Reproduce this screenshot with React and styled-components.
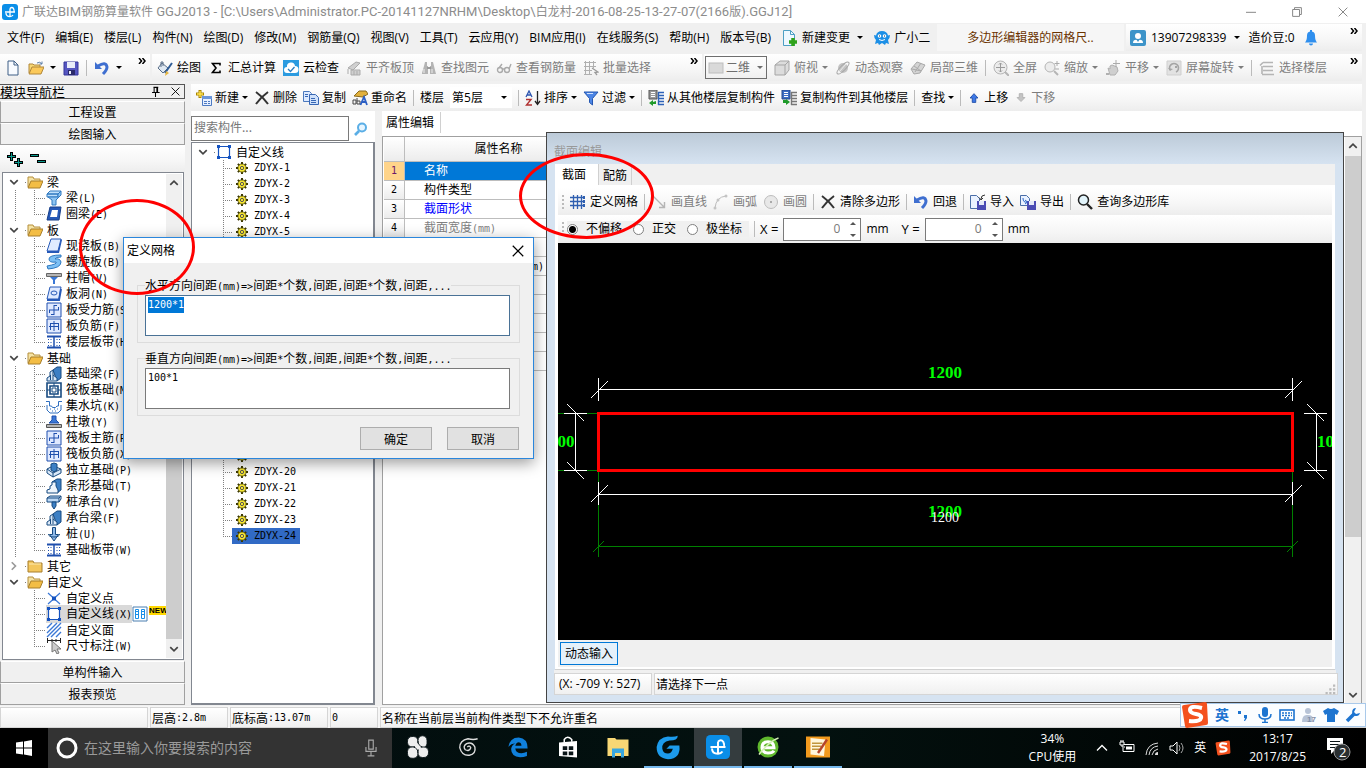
import React, { useEffect, useRef } from "react";
import styled, { createGlobalStyle, css } from "styled-components";

const SANS = `"Open Sans", "Noto Sans CJK SC", sans-serif`;
const SONG = `"Noto Sans CJK SC", sans-serif`;

/* ---------- text helper: narrow latin glyphs between CJK ---------- */

function Song({ text, as: Latin = Narrow }) {
  return text
    .split(/([\x20-\x7e]+)/)
    .filter(Boolean)
    .map((part, i) =>
      /[\x20-\x7e]/.test(part) ? <Latin key={i}>{part}</Latin> : part
    );
}

/* ---------- icons ---------- */

const Svg = ({ size = 16, children, ...rest }) => (
  <svg
    width={size}
    height={size}
    viewBox="0 0 16 16"
    fill="none"
    aria-hidden="true"
    {...rest}
  >
    {children}
  </svg>
);

const icons = {
  app: (
    <Svg>
      <rect width="16" height="16" rx="3" fill="#0a8ee8" />
      <path d="M3 8h10M8 4.500V12M8 4.500q2-2 3.500 0 1 2 .5 3.500M4 9q0 3.500 4 3.500 2 0 3-1.500" stroke="#fff" strokeWidth="1.300" />
    </Svg>
  ),
  doc: (
    <Svg>
      <path d="M3 1h6l4 4v10H3z" fill="#f8fbff" stroke="#3f5f86" />
      <path d="M9 1v4h4" stroke="#3f5f86" />
    </Svg>
  ),
  open: (
    <Svg>
      <path d="M1 13V4h4l1 1h6v2" fill="#f7d774" stroke="#b1873a" />
      <path d="M1 14l3-7h12l-3 7z" fill="#fbc95a" stroke="#b1873a" />
      <path d="M9 3q3-2 5 1m0-2.500V4h-2.500" stroke="#5c7ea8" />
    </Svg>
  ),
  save: (
    <Svg>
      <path d="M1 2h14v13H1z" fill="#5556c0" stroke="#34349a" />
      <path d="M4 2h8v6H4z" fill="#e8ecf8" />
      <path d="M5 10h7v5H5z" fill="#2a2a6a" />
      <path d="M6 11h2v3H6z" fill="#e8ecf8" />
    </Svg>
  ),
  undo: (
    <Svg>
      <path d="M4 6q8-5 9 1 0 3-4 7" stroke="#3f6fd0" strokeWidth="3" />
      <path d="M1 2v7h7z" fill="#3f6fd0" />
    </Svg>
  ),
  paint: (
    <Svg>
      <path d="M5 3l6 5-5 5-5-5z" fill="#dfe8f2" stroke="#5a6f88" />
      <path d="M4 7V2h2v4" stroke="#5a6f88" />
      <path d="M15 3L8 13" stroke="#2f5c96" strokeWidth="2" />
      <path d="M9 11l3 2-4 3z" fill="#e8b740" />
    </Svg>
  ),
  sigma: (
    <Svg>
      <path d="M12 5.500V3.500H4.500L8 8l-3.500 4.500H12v-2" stroke="#000" strokeWidth="1.600" />
    </Svg>
  ),
  cloud: (
    <Svg>
      <rect width="16" height="16" fill="#2b9be0" />
      <path d="M4 13a3 3 0 0 1 0-6 4 4 0 0 1 8-1 3.500 3.500 0 0 1 0 7z" fill="#fff" />
      <path d="M5 9l2.500 2.500L11.500 7" stroke="#2b7ec0" strokeWidth="1.300" />
    </Svg>
  ),
  slab: (
    <Svg>
      <path d="M2 8l8-6 4 1-7 7zM5 10h9v5H5z" fill="#d0d0d0" stroke="#ababab" />
      <path d="M8 11v4M11 11v4M2 9v5" stroke="#ababab" />
    </Svg>
  ),
  find: (
    <Svg>
      <path d="M4 2h2v4H3zM10 2h2l1 4h-3zM1 13l2-7h4v8H1zM9 6h4l2 8H9z" fill="#b4b4b4" />
      <path d="M6 8h4" stroke="#999" strokeWidth="2" />
      <path d="M3 9v4M11 9v4" stroke="#eee" />
    </Svg>
  ),
  glasses: (
    <Svg>
      <circle cx="4" cy="10" r="2.500" stroke="#aaa" strokeWidth="1.400" />
      <circle cx="11" cy="10" r="2.500" stroke="#aaa" strokeWidth="1.400" />
      <path d="M6 9h3M3 8l3-4M13 9l2-5" stroke="#aaa" strokeWidth="1.400" />
    </Svg>
  ),
  batch: (
    <Svg>
      <path d="M1 2.500h12M1 6.500h12M1 10.500h8M1 14.500h8M2.500 1v14M6.500 1v14M10.500 1v7" stroke="#b0b0b0" />
      <path d="M9 8l6 4-3 .5L14 15" stroke="#999" strokeWidth="1.300" />
    </Svg>
  ),
  flat: (
    <Svg>
      <rect x="1" y="3" width="14" height="10" fill="#d9d9d9" stroke="#bdbdbd" />
    </Svg>
  ),
  cube: (
    <Svg>
      <path d="M1 5l5-4h9v9l-4 5H1z" fill="#dcdcdc" stroke="#a5a5a5" />
      <path d="M1 5h10v10M11 5l4-4" stroke="#a5a5a5" />
    </Svg>
  ),
  orbit: (
    <Svg>
      <circle cx="8" cy="8" r="5" fill="#c3c3c3" />
      <ellipse cx="8" cy="8" rx="8" ry="2.500" transform="rotate(-45 8 8)" stroke="#a5a5a5" />
      <path d="M4 12l7-8" stroke="#eee" />
    </Svg>
  ),
  local3d: (
    <Svg>
      <path d="M1 9l6-7 8 3-5 8-6 1z" fill="#d4d4d4" stroke="#a9a9a9" />
      <path d="M4 6l7 5M5 12l6-9M2 9l9 2" stroke="#a9a9a9" />
    </Svg>
  ),
  full: (
    <Svg>
      <circle cx="7.500" cy="7.500" r="6.500" fill="#ececec" stroke="#b5b5b5" />
      <path d="M7.500 3v9M3 7.500h9M6 4.500L7.500 3 9 4.500M6 10.500L7.500 12 9 10.500" stroke="#9b9b9b" />
      <path d="M12 12l4 4" stroke="#b5b5b5" strokeWidth="2" />
    </Svg>
  ),
  zoom: (
    <Svg>
      <circle cx="6" cy="7" r="5" fill="#ececec" stroke="#b5b5b5" />
      <path d="M10 11l4 4" stroke="#b5b5b5" strokeWidth="2" />
      <path d="M13 1v5M10.500 3.500h5M11 9h4" stroke="#ababab" />
    </Svg>
  ),
  pan: (
    <Svg>
      <path d="M3 8l2 1V6l2-1 5 2 1 4-3 4H5z" fill="#cfcfcf" stroke="#b0b0b0" />
      <path d="M11 0v7M8 3.500h7" stroke="#ababab" />
      <path d="M1 13h3v2H1z" fill="#b0b0b0" />
    </Svg>
  ),
  rotate: (
    <Svg>
      <path d="M1 1h14v14H1z" fill="#e2e2e2" stroke="#cfcfcf" />
      <path d="M4 10a4.500 4.500 0 1 1 6 2" stroke="#a5a5a5" strokeWidth="1.600" />
      <path d="M2 8l2 3 3-2zM9 6h2v2H9z" fill="#a5a5a5" />
    </Svg>
  ),
  floors: (
    <Svg>
      <path d="M4 2.500h10M1 5.500l3-3M4 6.500h10M4 10.500h10M3 14.500h12M3 6v8" stroke="#b5b5b5" strokeWidth="1.600" />
    </Svg>
  ),
  newChange: (
    <Svg>
      <path d="M1.500 .5h7l4 4v11h-11z" fill="#eef8ff" stroke="#4c9fc4" />
      <path d="M8.500 .5v4h4" stroke="#4c9fc4" />
      <path d="M11 8v8M7 12h8" stroke="#2fa21a" strokeWidth="3.500" />
    </Svg>
  ),
  mascot: (
    <Svg>
      <path d="M2 10Q0 8 0 5l2 .5Q3 1 8 1t6 4.500L16 5q0 3-2 5l1 4-3-1-1 2-3-2-3 2-1-2-3 1z" fill="#1c8fe6" />
      <circle cx="5.500" cy="6" r="1.800" fill="#fff" />
      <circle cx="10.500" cy="6" r="1.800" fill="#fff" />
      <path d="M5 9.500q3 2 6 0" stroke="#fff" />
      <path d="M5 5.500h1v1H5zM10 5.500h1v1h-1z" fill="#024" />
    </Svg>
  ),
  user: (
    <Svg>
      <rect width="16" height="16" rx="2" fill="#3d94c9" />
      <circle cx="8" cy="6" r="3" fill="#fff" />
      <path d="M3 13q0-4 5-3 5-1 5 3z" fill="#fff" />
      <path d="M6 9h4l-2 3z" fill="#3d94c9" />
    </Svg>
  ),
  bell: (
    <Svg>
      <path d="M2 12.500q2-2 2-7a4 4 0 0 1 8 0q0 5 2 7z" fill="#2f8fee" />
      <path d="M6 13.500h4a2 2 0 0 1-4 0zM7 0h2v2H7z" fill="#2f8fee" />
    </Svg>
  ),
  create: (
    <Svg>
      <path d="M6.500 6.500h9v9h-9z" fill="#e7f0ff" stroke="#4d7ac2" />
      <path d="M6 6h10v3H6z" fill="#6a95db" />
      <path d="M8 11.500h3m1 0h2M8 13.500h3m1 0h2" stroke="#4d7ac2" />
      <path d="M4 0v8M0 4h8" stroke="#a98500" strokeWidth="3" />
      <path d="M4 1v6M1 4h6" stroke="#ffe34d" strokeWidth="1.400" />
    </Svg>
  ),
  cross: (
    <Svg>
      <path d="M2 2q7 5 12 12M14 2Q7 7 2 14" stroke="#333" strokeWidth="2" />
    </Svg>
  ),
  copy: (
    <Svg>
      <path d="M.5 1.500h6l2 2v8h-8z" fill="#dbe9ff" stroke="#4b78bd" />
      <path d="M6.500 4.500h6l3 3v7h-9z" fill="#cfe1fb" stroke="#3867b4" />
      <path d="M2 4.500h3M2 6.500h3M8 8.500h4M8 10.500h5M8 12.500h5" stroke="#3867b4" />
    </Svg>
  ),
  rename: (
    <Svg>
      <path d="M2 6l5-5h7l2 3-5 3z" fill="#e2b13c" stroke="#8a6a1c" />
      <path d="M1 10h3v4H1zM5 8v6h3v-3H5" stroke="#444" />
      <path d="M8.500 15L12 7l3 8M10 12h4" stroke="#2c5fc4" strokeWidth="1.800" />
    </Svg>
  ),
  sort: (
    <Svg>
      <path d="M1 7l3-6 3 6M2 5h4" stroke="#2c55b0" strokeWidth="1.300" />
      <path d="M1 9.500h5L1.500 15H7" stroke="#b03030" strokeWidth="1.400" />
      <path d="M12.500 1v13M10 11l2.500 3.500L15 11" stroke="#222" strokeWidth="1.300" />
    </Svg>
  ),
  filter: (
    <Svg>
      <path d="M1 2h14L9.500 8.500V15L6.500 12.500v-4z" fill="#4d86e6" stroke="#2456b0" />
      <path d="M4 3.500h6" stroke="#cfe1ff" />
    </Svg>
  ),
  copyFrom: (
    <Svg>
      <path d="M1 0h8v9H1z" fill="#9a9a9a" stroke="#555" />
      <path d="M3 2.500h4M3 4.500h4M3 6.500h4" stroke="#fff" />
      <path d="M10 2.500h6M10 5.500h6M10 8.500h6M10 11.500h6M10 14.500h6M10.500 2v13" stroke="#2d62b8" strokeWidth="1.400" />
      <path d="M8 11v3H5v2l-4-3 4-3v2z" fill="#1f9a2a" />
    </Svg>
  ),
  copyTo: (
    <Svg>
      <path d="M1 0h8v9H1z" fill="#3b6cc4" stroke="#24488c" />
      <path d="M3 2.500h4M3 4.500h4M3 6.500h4" stroke="#fff" />
      <path d="M10 2.500h6M10 5.500h6M10 8.500h6M10 11.500h6M10 14.500h6M10.500 2v13" stroke="#777" strokeWidth="1.400" />
      <path d="M2 10v3h3v2l4-3-4-3v1z" fill="#1f9a2a" />
    </Svg>
  ),
  up: (
    <Svg size={14}>
      <path d="M8 3l4.500 5H10v5H6V8H3.500z" fill="#3d78e6" stroke="#1f4ba6" />
    </Svg>
  ),
  down: (
    <Svg size={14}>
      <path d="M8 12L3.500 7.500H6V3h4v4.500h2.500z" fill="#c4c4c4" stroke="#b0b0b0" />
    </Svg>
  ),
  grid: (
    <Svg>
      <path d="M0 3.500h15M0 7.500h15M0 11.500h15M3.500 1v14M7.500 1v14M11.500 1v14" stroke="#2f5fb0" strokeWidth="1.300" />
      <path d="M13 2h2v3h-2zM13 6h2v3h-2zM13 10h2v3h-2z" fill="#2f5fb0" />
    </Svg>
  ),
  line: (
    <Svg>
      <path d="M1 1l12 12M13.500 8v5.500H8" stroke="#b5b5b5" strokeWidth="1.400" />
    </Svg>
  ),
  arc: (
    <Svg>
      <path d="M2 14Q3 3 13 2" stroke="#bcbcbc" />
      <circle cx="2" cy="14" r="1.500" fill="#c4c4c4" />
      <circle cx="13" cy="2" r="1.500" fill="#c4c4c4" />
      <circle cx="5" cy="6" r="1.500" fill="#c4c4c4" />
    </Svg>
  ),
  circle: (
    <Svg>
      <circle cx="8" cy="8" r="6.500" fill="#e8e8e8" stroke="#bdbdbd" />
      <path d="M7 7h2v2H7z" fill="#aaa" />
    </Svg>
  ),
  importDoc: (
    <Svg>
      <path d="M.5 1.500h6l3 3v10h-9z" fill="#eaf2ff" stroke="#4a6ea8" />
      <path d="M7 7h9v9H7z" fill="#4b4cb4" />
      <path d="M9 7h5v4H9z" fill="#e6eaf8" />
      <path d="M15 1q-4 0-4 4M9 3.500L11 6l2-2" stroke="#333" />
    </Svg>
  ),
  exportDoc: (
    <Svg>
      <path d="M.5 1.500h6l3 3v7h-9z" fill="#eaf2ff" stroke="#4a6ea8" />
      <path d="M7 7h9v9H7z" fill="#4b4cb4" />
      <path d="M9 7h5v4H9z" fill="#e6eaf8" />
      <path d="M3 4q0 5 4 4M5 6l2.500 2L5 10" stroke="#2b66c8" />
    </Svg>
  ),
  lens: (
    <Svg>
      <circle cx="6.500" cy="6" r="5" fill="#e2f4fb" stroke="#222" strokeWidth="1.500" />
      <path d="M10 10l5 5" stroke="#222" strokeWidth="2.400" />
    </Svg>
  ),
  searchBlue: (
    <Svg>
      <circle cx="9" cy="6.500" r="4" fill="#e6f5ff" stroke="#5aaee6" strokeWidth="2" />
      <path d="M6 10l-4 4" stroke="#5aaee6" strokeWidth="2.600" />
    </Svg>
  ),
  folderOpen: (
    <Svg>
      <path d="M1 13V3h5l1 2h6v3" fill="#f5e3a4" stroke="#b58f3c" />
      <path d="M1 14l3-7h12l-3 7z" fill="#f3bd45" stroke="#a87f2c" />
    </Svg>
  ),
  folder: (
    <Svg>
      <path d="M1 14V3h5l1 2h8v9z" fill="#f3c65c" stroke="#a87f2c" />
      <path d="M2 6h12" stroke="#fdeab0" />
    </Svg>
  ),
  square: (
    <Svg>
      <path d="M2.500 2.500h11v11h-11z" fill="#fff" stroke="#1553c0" strokeWidth="1.200" />
      <path d="M1 1h3v3H1zM12 1h3v3h-3zM1 12h3v3H1zM12 12h3v3h-3z" fill="#1553c0" />
    </Svg>
  ),
  beam: (
    <Svg>
      <path d="M1 4l3-3h11l-3 3zM1 4h11v3H1z" fill="#bfe0fb" stroke="#2f78c0" />
      <path d="M2 7l4 3v5h4v-5l5-5V1l-3 3v3z" fill="#8ec5f2" stroke="#2f78c0" />
    </Svg>
  ),
  ring: (
    <Svg>
      <path d="M4 1h11l-2 13H1z" fill="#2659b8" stroke="#173f8a" />
      <path d="M6 4h6l-1 7H4z" fill="#fff" />
    </Svg>
  ),
  plate: (
    <Svg>
      <path d="M5 1h10l-3 12H1z" fill="#e0ecff" stroke="#2659b8" />
      <path d="M15 1l-3 12H1v2h12l3-13z" fill="#2659b8" />
    </Svg>
  ),
  spiral: (
    <Svg>
      <path d="M15 1Q3 1 3 5t7 3q2 2-9 4l1 3q13-1 13-7-1-4-6-3 0-2 6-2z" fill="#7cc0f4" stroke="#2f78c0" />
    </Svg>
  ),
  cap: (
    <Svg>
      <path d="M.5 3.500h15v3H.5z" fill="#b5b5b5" stroke="#666" />
      <path d="M4 7h8l-3 3v4H7v-4z" fill="#3a78d6" />
    </Svg>
  ),
  hole: (
    <Svg>
      <path d="M4 1h11l-2 12H1z" fill="#dfeaff" stroke="#2659b8" />
      <path d="M1 14h12l2-11" stroke="#2659b8" strokeWidth="2" />
      <ellipse cx="8" cy="7" rx="3" ry="2" stroke="#2659b8" />
    </Svg>
  ),
  rebar: (
    <Svg>
      <path d="M1 1h14v14H1z" fill="#dfe9ff" stroke="#1e4fae" />
      <path d="M8 3v10M3 8h10M3.500 8v3M12.500 5v3M5 12.500h3M8 3.500h3" stroke="#1e4fae" />
    </Svg>
  ),
  rebarNeg: (
    <Svg>
      <path d="M1 1h14v14H1z" fill="#dfe9ff" stroke="#1e4fae" />
      <path d="M8 3v10M4 5.500h9M3 8.500h10M4.500 5v7M12.500 5v7" stroke="#1e4fae" />
    </Svg>
  ),
  strip: (
    <Svg>
      <path d="M1 2.500h14M1 13.500h14" stroke="#1e4fae" strokeWidth="2" />
      <path d="M8 3v10" stroke="#1e4fae" strokeWidth="1.500" />
      <path d="M2.500 5v7M13.500 5v7M5 5v7M11 5v7" stroke="#1e4fae" strokeDasharray="1 2" />
    </Svg>
  ),
  baseBeam: (
    <Svg>
      <path d="M7 4l4-3h4v11l-4 3z" fill="#3c7fc4" stroke="#174a80" />
      <path d="M1 15v-3l3-2V6l3-2v5l4 3v3z" fill="#dbe9f8" stroke="#174a80" />
      <path d="M4.500 9v5M7 9v5" stroke="#174a80" />
    </Svg>
  ),
  raft: (
    <Svg>
      <path d="M1 1h14v14H1zM4 4h8v8H4z" stroke="#174a80" strokeWidth="1.600" />
      <path d="M8 1v3M8 12v3M1 8h3M12 8h3M6 6h4v4H6z" stroke="#174a80" />
    </Svg>
  ),
  pit: (
    <Svg>
      <path d="M0 3.500h3.500V8h2l1 1.500h3L11 8h1.500V3.500H16M1 7v5l3 3h8l3-3V7" stroke="#2f6fc0" />
      <path d="M4 11h1M8 11h1M11 11h1M6 13h1M9 13h1" stroke="#2f6fc0" />
    </Svg>
  ),
  pier: (
    <Svg>
      <path d="M6 2h4v4l3 3H3l3-3z" fill="#3a78d6" stroke="#1e4fae" />
      <path d="M.5 10.500h15v3H.5z" fill="#b5b5b5" stroke="#555" />
    </Svg>
  ),
  isolated: (
    <Svg>
      <path d="M1 7l6-3 8 3v4l-8 4-6-4z" fill="#d9e8f8" stroke="#174a80" />
      <path d="M5 2l3-1 3 1v6L8 10 5 8z" fill="#3c7fc4" stroke="#174a80" />
      <path d="M7 15v-4M1 7l6 4 8-4" stroke="#174a80" />
    </Svg>
  ),
  stripBase: (
    <Svg>
      <path d="M6 4l5-3h4v11l-4 3z" fill="#3c7fc4" stroke="#174a80" />
      <path d="M1 15v-3l3-1V8l2-1V4h4v4l2 4v3z" fill="#eef5fc" stroke="#174a80" />
    </Svg>
  ),
  pileCap: (
    <Svg>
      <path d="M1 4l3-2h11l-2 2v4H1zM1 4h12M13 8l2-3V2" fill="#bcd8f5" stroke="#174a80" />
      <path d="M6 8h4v4l-2 3-2-3z" fill="#3c7fc4" stroke="#174a80" />
    </Svg>
  ),
  pile: (
    <Svg>
      <path d="M6.500 1.500h3v7h3L8 15 3.500 8.500h3z" fill="#8fb9e8" stroke="#174a80" />
      <path d="M2.500 8q0 3 5.500 3t5.500-3" stroke="#174a80" />
    </Svg>
  ),
  point: (
    <Svg>
      <path d="M2 3l12 11M14 3L2 14" stroke="#3a78d6" strokeWidth="1.200" />
      <path d="M6 6.500h4v4H6z" fill="#1553c0" />
    </Svg>
  ),
  face: (
    <Svg>
      <path d="M1 6l5-5M1 11L11 1M1 15L15 1M5 15L15 5M10 15l5-5" stroke="#3a78d6" strokeWidth="1.400" />
    </Svg>
  ),
  dimension: (
    <Svg>
      <path d="M1 2.500h14M1.500 0v5M14.500 0v5M6 1v3M10 1v3" stroke="#222" />
      <path d="M6 3v11l3-2 2 4 2-1-2-4h4z" fill="#ccc" stroke="#777" />
    </Svg>
  ),
  book: (
    <Svg>
      <path d="M1 1h14v14H1z" fill="#fff" stroke="#4a7fb0" />
      <path d="M3.500 3.500h3v9h-3zM9.500 3.500h3v9h-3z" fill="#fff" stroke="#1a8fe8" />
      <path d="M3 5.500h4M3 8.500h4M9 5.500h4M9 8.500h4" stroke="#1a8fe8" />
    </Svg>
  ),
  gear: (
    <Svg size={12}>
      <path d="M8 0v16M0 8h16M2.500 2.500l11 11M13.500 2.500l-11 11" stroke="#3b3700" strokeWidth="2.600" />
      <circle cx="8" cy="8" r="5.500" fill="#f7e733" stroke="#3b3700" />
      <circle cx="8" cy="8" r="2.200" fill="#f7e733" stroke="#555" strokeWidth="1.300" />
    </Svg>
  ),
};

const Chevron = ({ dir = "down", color = "#444", size = 12 }) => {
  const paths = {
    down: "M3 5.500l5 5 5-5",
    up: "M3 10.500l5-5 5 5",
    right: "M5 3l5 5-5 5",
  };
  return (
    <Svg size={size}>
      <path d={paths[dir]} stroke={color} strokeWidth="2.200" />
    </Svg>
  );
};

const CloseIcon = ({ size = 10, color = "#000" }) => (
  <Svg size={size}>
    <path d="M1 1l14 14M15 1L1 15" stroke={color} strokeWidth="1.600" />
  </Svg>
);

/* ---------- data ---------- */

const menus = [
  "文件(F)", "编辑(E)", "楼层(L)", "构件(N)", "绘图(D)", "修改(M)", "钢筋量(Q)",
  "视图(V)", "工具(T)", "云应用(Y)", "BIM应用(I)", "在线服务(S)", "帮助(H)", "版本号(B)",
];

const drawTools = [
  { icon: "paint", label: "绘图" },
  { icon: "sigma", label: "汇总计算" },
  { icon: "cloud", label: "云检查" },
  { icon: "slab", label: "平齐板顶", off: true },
  { icon: "find", label: "查找图元", off: true },
  { icon: "glasses", label: "查看钢筋量", off: true },
  { icon: "batch", label: "批量选择", off: true },
];

const viewTools = [
  { icon: "cube", label: "俯视", off: true, drop: true },
  { icon: "orbit", label: "动态观察", off: true },
  { icon: "local3d", label: "局部三维", off: true },
  { sep: true },
  { icon: "full", label: "全屏", off: true },
  { icon: "zoom", label: "缩放", off: true, drop: true },
  { icon: "pan", label: "平移", off: true, drop: true },
  { icon: "rotate", label: "屏幕旋转", off: true, drop: true },
  { sep: true },
  { icon: "floors", label: "选择楼层", off: true },
];

const partTools = [
  { icon: "create", label: "新建", drop: true },
  { icon: "cross", label: "删除" },
  { icon: "copy", label: "复制" },
  { icon: "rename", label: "重命名" },
  { sep: true },
];

const listTools = [
  { sep: true },
  { icon: "sort", label: "排序", drop: true },
  { icon: "filter", label: "过滤", drop: true },
  { sep: true },
  { icon: "copyFrom", label: "从其他楼层复制构件" },
  { icon: "copyTo", label: "复制构件到其他楼层" },
  { sep: true },
  { label: "查找", drop: true },
  { sep: true },
  { icon: "up", label: "上移" },
  { icon: "down", label: "下移", off: true },
];

const polygonTools = [
  { icon: "grid", label: "定义网格" },
  { sep: true },
  { icon: "line", label: "画直线", off: true },
  { icon: "arc", label: "画弧", off: true },
  { icon: "circle", label: "画圆", off: true },
  { sep: true },
  { icon: "cross", label: "清除多边形" },
  { sep: true },
  { icon: "undo", label: "回退" },
  { sep: true },
  { icon: "importDoc", label: "导入" },
  { icon: "exportDoc", label: "导出" },
  { sep: true },
  { icon: "lens", label: "查询多边形库" },
];

const modules = [
  { name: "梁", open: true, items: [["beam", "梁(L)"], ["ring", "圈梁(E)"]] },
  {
    name: "板",
    open: true,
    items: [
      ["plate", "现浇板(B)"], ["spiral", "螺旋板(B)"], ["cap", "柱帽(V)"], ["hole", "板洞(N)"],
      ["rebar", "板受力筋(S)"], ["rebarNeg", "板负筋(F)"], ["strip", "楼层板带(H)"],
    ],
  },
  {
    name: "基础",
    open: true,
    items: [
      ["baseBeam", "基础梁(F)"], ["raft", "筏板基础(M)"], ["pit", "集水坑(K)"], ["pier", "柱墩(Y)"],
      ["rebar", "筏板主筋(R)"], ["rebarNeg", "筏板负筋(X)"], ["isolated", "独立基础(P)"],
      ["stripBase", "条形基础(T)"], ["pileCap", "桩承台(V)"], ["baseBeam", "承台梁(F)"],
      ["pile", "桩(U)"], ["strip", "基础板带(W)"],
    ],
  },
  { name: "其它", open: false, items: [] },
  {
    name: "自定义",
    open: true,
    last: true,
    items: [["point", "自定义点"], ["square", "自定义线(X)"], ["face", "自定义面"], ["dimension", "尺寸标注(W)"]],
  },
];

const parts = Array.from({ length: 24 }, (_, i) => `ZDYX-${i + 1}`);

const properties = [
  { name: "名称", tone: "selected" },
  { name: "构件类型" },
  { name: "截面形状", tone: "link" },
  { name: "截面宽度(mm)", tone: "muted" },
  { name: "截面高度(mm)", tone: "muted" },
  { name: "轴线距左边线距离(mm)" },
  { name: "" }, { name: "" }, { name: "" }, { name: "" }, { name: "" },
];

/* ---------- shared pieces ---------- */

function Tools({ items }) {
  return items.map((t, i) =>
    t.sep ? (
      <Separator key={i} />
    ) : (
      <Tool key={i} type="button" disabled={t.off}>
        {t.icon && icons[t.icon]}
        <span>{t.label}</span>
        {t.drop && <Caret />}
      </Tool>
    )
  );
}

const MoreIcon = () => (
  <More>
    <svg width="8" height="6" viewBox="0 0 8 6" aria-hidden="true">
      <path d="M1 0l2.500 3L1 6M4.500 0L7 3 4.500 6" fill="none" stroke="#000" strokeWidth="1.500" />
    </svg>
  </More>
);

function TitleBar() {
  return (
    <Title>
      {icons.app}
      <h1>
        <Song
          as={TitleLatin}
          text={"广联达BIM钢筋算量软件 GGJ2013 - [C:\\Users\\Administrator.PC-20141127NRHM\\Desktop\\白龙村-2016-08-25-13-27-07(2166版).GGJ12]"}
        />
      </h1>
      <WindowButton type="button" aria-label="minimize">
        <Svg size={10}><path d="M0 8.500h16" stroke="#888" strokeWidth="1.600" /></Svg>
      </WindowButton>
      <WindowButton type="button" aria-label="restore">
        <Svg size={10}>
          <path d="M1 4h11v11H1zM4 4V1h11v11h-3" stroke="#888" strokeWidth="1.600" />
        </Svg>
      </WindowButton>
      <WindowButton type="button" aria-label="close">
        <CloseIcon color="#888" />
      </WindowButton>
    </Title>
  );
}

function MenuBar() {
  return (
    <MenuRow>
      <Menus>
        {menus.map((m) => (
          <MenuButton key={m} type="button">{m}</MenuButton>
        ))}
        <Tool type="button">{icons.newChange}<span>新建变更</span><Caret $wide /></Tool>
        <Tool type="button">{icons.mascot}<span>广小二</span></Tool>
      </Menus>
      <Notice href="#">多边形编辑器的网格尺..</Notice>
      <Account>
        {icons.user}
        <span>13907298339</span>
        <Caret $wide />
        <Credits>造价豆:0</Credits>
        {icons.bell}
        <MoreIcon />
      </Account>
    </MenuRow>
  );
}

function MainToolbar() {
  return (
    <ToolbarRow>
      <Band $width="150px">
        <Quick type="button" aria-label="new">{icons.doc}</Quick>
        <Quick type="button" aria-label="open">{icons.open}<Caret /></Quick>
        <Quick type="button" aria-label="save">{icons.save}</Quick>
        <Separator />
        <Quick type="button" aria-label="undo">{icons.undo}<Caret /></Quick>
        <MoreIcon />
      </Band>
      <Band $width="550px">
        <Tools items={drawTools} />
        <MoreIcon />
      </Band>
      <Band $grow $flush>
        <ViewPick>
          {icons.flat}
          <select aria-label="view" disabled defaultValue="2d">
            <option value="2d">二维</option>
          </select>
          <Caret />
        </ViewPick>
        <Tools items={viewTools} />
        <MoreIcon />
      </Band>
    </ToolbarRow>
  );
}

function ModuleNav() {
  return (
    <Nav>
      <NavTitle>
        <span>模块导航栏</span>
        <Svg size={11}>
          <path d="M5 2h7M6 2v7M10 2v7M11 2v7M3 9.500h11M8 10v6" stroke="#000" strokeWidth="1.500" />
        </Svg>
        <CloseIcon size={9} />
      </NavTitle>
      <NavButton type="button">工程设置</NavButton>
      <NavButton type="button">绘图输入</NavButton>
      <ExpandBar>
        <svg width="40" height="16" viewBox="0 0 40 16" aria-hidden="true">
          <path d="M0 4.500h9M4.500 0v9M7 10.500h9M11.500 6v9M23 3.500h9M30 9.500h9" stroke="#000" strokeWidth="3" />
          <path d="M1 4.500h7M4.500 1v7M8 10.500h7M11.500 7v7M24 3.500h7M31 9.500h7" stroke="#0a9a8e" strokeWidth="1" />
        </svg>
      </ExpandBar>
      <TreeBox>
        <TreeList>
          {modules.map((group) => (
            <li key={group.name}>
              <TreeRow>
                <Toggle $width="22px">
                  <Chevron dir={group.open ? "down" : "right"} color={group.open ? "#444" : "#999"} />
                </Toggle>
                <Dots $width="2px" />
                {icons[group.open ? "folderOpen" : "folder"]}
                <TreeText>{group.name}</TreeText>
              </TreeRow>
              {group.items.map(([icon, label], i) => (
                <TreeRow key={label}>
                  <Trunk $hidden={group.last} />
                  <Branch $width="12px" $last={i === group.items.length - 1} />
                  <TreeItem $active={label === "自定义线(X)"}>
                    {icons[icon]}
                    <TreeText><Song text={label} /></TreeText>
                  </TreeItem>
                  {label === "自定义线(X)" && (
                    <>
                      {icons.book}
                      <NewFlag>NEW</NewFlag>
                    </>
                  )}
                </TreeRow>
              ))}
            </li>
          ))}
        </TreeList>
        <ScrollTrack>
          <Chevron dir="up" />
          <ScrollSpace $grow={1} />
          <ScrollThumb $grow={3} />
          <Chevron />
        </ScrollTrack>
      </TreeBox>
      <NavButton type="button">单构件输入</NavButton>
      <NavButton type="button">报表预览</NavButton>
    </Nav>
  );
}

function PartList() {
  return (
    <PartColumn>
      <SearchRow>
        <input type="text" placeholder="搜索构件..." aria-label="搜索构件" />
        <button type="button" aria-label="search">{icons.searchBlue}</button>
      </SearchRow>
      <PartBox>
        <TreeRow>
          <Toggle $width="22px"><Chevron /></Toggle>
          <Dots $width="2px" />
          {icons.square}
          <TreeText>自定义线</TreeText>
        </TreeRow>
        {parts.map((p, i) => (
          <TreeRow key={p}>
            <PartIndent />
            <Branch $width="9px" $last={i === parts.length - 1} />
            <PartName $active={p === "ZDYX-24"}>
              {icons.gear}
              <Narrow>{p}</Narrow>
            </PartName>
          </TreeRow>
        ))}
      </PartBox>
    </PartColumn>
  );
}

function PropertyPanel() {
  return (
    <PropertyColumn>
      <PropertyTab type="button">属性编辑</PropertyTab>
      <PropertyBody>
        <PropertyTable>
          <thead>
            <tr>
              <th aria-label="index" />
              <th>属性名称</th>
              <th>属性值</th>
            </tr>
          </thead>
          <tbody>
            {properties.map((p, i) => (
              <PropertyRow key={i} $tone={p.tone}>
                <th>{i + 1}</th>
                <td><Song text={p.name} /></td>
                <td />
              </PropertyRow>
            ))}
          </tbody>
        </PropertyTable>
        <ScrollTrack>
          <Chevron dir="up" />
          <ScrollThumb $grow={385} />
          <ScrollSpace $grow={145} />
          <Chevron />
        </ScrollTrack>
      </PropertyBody>
    </PropertyColumn>
  );
}

function SectionDrawing() {
  return (
    <svg width="100%" height="397" viewBox="558 243 774 397" preserveAspectRatio="xMidYMid slice" role="img" aria-label="section">
      <g stroke="#008000">
        <path d="M558 413.500h40M558 470.500h40M598.500 472v85M1292.500 472v85M598 546.500h695" />
        <path d="M593 552l11-11M1287 552l11-11" />
      </g>
      <g stroke="#fff">
        <path d="M598 389.500h695M598.500 378v23M1292.500 378v23M591 398l17-17M1285 398l17-17" />
        <path d="M598 494.500h695M598.500 482v23M1292.500 482v23M591 502l17-17M1285 502l17-17" />
        <path d="M575.500 413v57M564 413.500h23M564 470.500h23M567 404l17 17M567 462l17 17" />
        <path d="M1316.500 413v57M1304 413.500h23M1304 470.500h23M1307 404l17 17M1307 462l17 17" />
      </g>
      <rect x="598.500" y="413.500" width="694" height="57" fill="none" stroke="#f00" strokeWidth="3" />
      <g fill="#0f0" fontFamily="Liberation Serif" fontSize="17" fontWeight="700">
        <text x="928" y="378">1200</text>
        <text x="928" y="517">1200</text>
        <text x="549" y="447">100</text>
        <text x="1317" y="447">100</text>
      </g>
      <text x="931" y="522" fill="#fff" fontFamily="Liberation Serif" fontSize="14">1200</text>
    </svg>
  );
}

function Offset({ id, label }) {
  return (
    <>
      <OffsetLabel htmlFor={id}>{label} =</OffsetLabel>
      <Spin>
        <input id={id} type="text" defaultValue="0" disabled />
        <span>
          <Triangle $up />
          <Triangle />
        </span>
      </Spin>
      <Unit>mm</Unit>
    </>
  );
}

function SectionEditor() {
  return (
    <EditorWindow>
      <EditorTitle>截面编辑</EditorTitle>
      <EditorPage>
        <EditorTabs>
          <EditorTab type="button" $active>截面</EditorTab>
          <EditorTab type="button">配筋</EditorTab>
        </EditorTabs>
        <EditorBody>
          <EditorBar>
            <Grip />
            <Tools items={polygonTools} />
          </EditorBar>
          <OffsetBar>
            <Grip />
            <Radios>
              <label><input type="radio" name="offset" defaultChecked />不偏移</label>
              <label><input type="radio" name="offset" />正交</label>
              <label><input type="radio" name="offset" />极坐标</label>
            </Radios>
            <Separator />
            <Offset id="offset-x" label="X" />
            <Offset id="offset-y" label="Y" />
          </OffsetBar>
          <Canvas><SectionDrawing /></Canvas>
          <EditorFoot>
            <button type="button">动态输入</button>
          </EditorFoot>
        </EditorBody>
      </EditorPage>
      <EditorStatus>
        <StatusCell $width="98px" $sans>(X: -709 Y: 527)</StatusCell>
        <StatusCell $grow>请选择下一点</StatusCell>
        <Svg size={12}>
          <path d="M12 2h3v3h-3zM12 7h3v3h-3zM12 12h3v3h-3zM7 7h3v3H7zM7 12h3v3H7zM2 12h3v3H2z" fill="#bbb" />
        </Svg>
      </EditorStatus>
    </EditorWindow>
  );
}

function GridDialog() {
  const first = useRef(null);

  useEffect(() => {
    first.current.focus();
    first.current.select();
  }, []);

  return (
    <Dialog role="dialog" aria-label="定义网格">
      <DialogTitle>
        <h2>定义网格</h2>
        <button type="button" aria-label="close"><CloseIcon size={12} /></button>
      </DialogTitle>
      <DialogForm>
        <Group>
          <legend>
            <label htmlFor="grid-h"><Song text="水平方向间距(mm)=>间距*个数,间距,间距*个数,间距,..." /></label>
          </legend>
          <textarea id="grid-h" ref={first} defaultValue="1200*1" spellCheck="false" />
        </Group>
        <Group>
          <legend>
            <label htmlFor="grid-v"><Song text="垂直方向间距(mm)=>间距*个数,间距,间距*个数,间距,..." /></label>
          </legend>
          <textarea id="grid-v" defaultValue="100*1" spellCheck="false" />
        </Group>
        <DialogButtons>
          <button type="button">确定</button>
          <button type="button">取消</button>
        </DialogButtons>
      </DialogForm>
    </Dialog>
  );
}

const Sogou = ({ size }) => (
  <svg width={size} height={size} viewBox="0 0 28 28" aria-hidden="true">
    <path d="M3 4l21-3q2 0 2 2l1 19q0 2-2 2L6 27q-2 0-2-2L1 6q0-2 2-2z" fill="#f4511e" />
    <path d="M21 7q-12-3-12 2 0 3 6 4t5 4q-1 4-12 3" fill="none" stroke="#fff" strokeWidth="4" />
  </svg>
);

function InputMethodBar() {
  return (
    <ImeBar>
      <Sogou size={28} />
      <strong>英</strong>
      <Svg><path d="M3 4h3v3H3zM9 8h3v3l-2 3H9l1-3H9z" fill="#1d74d0" /></Svg>
      <Svg>
        <rect x="5" y="0" width="6" height="10" rx="3" fill="#1d74d0" />
        <path d="M2 7q0 5 6 5t6-5M8 12v4M5 15.500h6" stroke="#1d74d0" strokeWidth="1.500" />
      </Svg>
      <Svg>
        <rect x="1" y="3" width="14" height="10" fill="#fff" stroke="#1d74d0" strokeWidth="1.600" />
        <path d="M3 6h10M3 8.500h10M5 11h6" stroke="#1d74d0" strokeWidth="1.300" strokeDasharray="2 1" />
      </Svg>
      <Svg>
        <circle cx="7" cy="4" r="3" fill="#b7c3d6" />
        <path d="M1 15q0-8 6-7 5 0 5 4v3z" fill="#b7c3d6" />
        <text x="6" y="15" fontSize="8" fontWeight="700" fill="#7f8ea6" fontFamily="Liberation Sans">17</text>
      </Svg>
      <Svg><path d="M0 4l5-3q3 2 6 0l5 3-2 4-2-1v8H4V7L2 8z" fill="#1d74d0" /></Svg>
      <Svg>
        <path d="M2 14l7-7" stroke="#1d74d0" strokeWidth="3.500" />
        <path d="M11 1a4 4 0 1 0 4 5l-4 1-2-2z" fill="#1d74d0" />
      </Svg>
    </ImeBar>
  );
}

const taskApps = [
  {
    name: "fan",
    icon: (
      <Svg size={24}>
        <g fill="#eee" stroke="#0a1518" strokeWidth=".6">
          <rect x="1" y="1" width="7" height="7" rx="3" /><rect x="8" y="0.500" width="6" height="8" rx="3" />
          <rect x="1" y="8" width="7" height="7.500" rx="3" /><rect x="8" y="8" width="7" height="7" rx="3" />
        </g>
        <path d="M6 5q4 1 4 3t-4 2" fill="#eee" />
        <path d="M5 8q3 1 3 4M11 8Q8 7 8 4" stroke="#0a1518" strokeWidth=".6" />
      </Svg>
    ),
  },
  {
    name: "swirl",
    icon: (
      <Svg size={22}>
        <path d="M15 2q-3 1-7 0-6 1-6 6.500Q3.500 14.500 9 14q5-1 4-6-2-4-6-2.500-3 2-1 4.500 3 1.500 4-1.500-1-2-2.500-.5" stroke="#ddd" />
      </Svg>
    ),
  },
  {
    name: "edge",
    icon: (
      <Svg size={22}>
        <path d="M1 8Q2 1 8.500 1 15 1.500 15 9H6q.5 3.500 4.500 3.500 2 0 4-1v3Q12 15.500 9.500 15.500 3 15 3 9.500 3.500 6.500 6 5.500 3 5.500 1 8zM6 7h4.500Q10.500 4.500 8 4.500 6.500 5 6 7z" fill="#1080dc" />
      </Svg>
    ),
  },
  {
    name: "store",
    icon: (
      <Svg size={24}>
        <path d="M2 5l12-1v11L2 14z" fill="#fff" />
        <path d="M5.500 5V3q2-3 5 0v1.500" stroke="#fff" />
        <path d="M4.500 7.500h3v2.500h-3zM8.500 7.500h3v2.500h-3zM4.500 11h3v2.500h-3zM8.500 11h3v2.500h-3z" fill="#0a1518" />
      </Svg>
    ),
  },
  {
    name: "explorer",
    icon: (
      <Svg size={24}>
        <path d="M1 2h5l1 1h8v11H1z" fill="#f8d775" />
        <path d="M4 15V9h8v6h-2v-3H6v3z" fill="#38a6e0" />
      </Svg>
    ),
  },
  {
    name: "gcloud",
    running: true,
    icon: (
      <Svg size={26}>
        <path d="M14 1q0 3-5 3-5 1-4.500 5Q5 12 8 12q2 0 3-3H7l2-2h6q1 8-7 8.500Q1 15 1 8 2 2 8 1.500q4 .5 6-.5z" fill="#1c9bec" />
      </Svg>
    ),
  },
  {
    name: "bim",
    running: true,
    active: true,
    icon: React.cloneElement(icons.app, { size: 24 }),
  },
  {
    name: "browser",
    running: true,
    icon: (
      <Svg size={24}>
        <circle cx="8" cy="8" r="7" fill="#5fb82d" />
        <path d="M4 8.500h8q0-4-4-4t-4 4q.5 3.500 4 3.500 3 0 4-1.500" stroke="#fff" strokeWidth="2" />
        <path d="M2 13Q9 4 15 2" stroke="#d6f0b8" />
      </Svg>
    ),
  },
  {
    name: "notes",
    running: true,
    icon: (
      <Svg size={24}>
        <path d="M0 1h16v14H0z" fill="#f29a1d" />
        <path d="M3 2l10 1-1 11-9-1z" fill="#fff6dc" />
        <path d="M4 5.500h7M4 7.500h6M4 9.500h5" stroke="#c0953e" />
        <path d="M14 3l-6 9" stroke="#b5442a" strokeWidth="1.600" />
      </Svg>
    ),
  },
];

function TaskBar() {
  return (
    <Task>
      <StartButton type="button" aria-label="start">
        <Svg>
          <path d="M0 2.500l7-1v6H0zM8 1.400L16 0v7.500H8zM0 8.500h7v6l-7-1zM8 8.500h8V16l-8-1.400z" fill="#fff" />
        </Svg>
      </StartButton>
      <TaskSearch>
        <svg width="22" height="22" viewBox="0 0 22 22" aria-hidden="true">
          <circle cx="11" cy="11" r="9" fill="none" stroke="#fff" strokeWidth="3" />
        </svg>
        <input type="text" placeholder="在这里输入你要搜索的内容" aria-label="search" />
        <Svg size={18}>
          <path d="M6 1h4v8H6zM3.500 7v4h9V7M8 11v4M5 15h6" stroke="#aaa" />
        </Svg>
      </TaskSearch>
      <TaskApps>
        {taskApps.map((a) => (
          <TaskApp key={a.name} type="button" aria-label={a.name} $running={a.running} $active={a.active}>
            {a.icon}
          </TaskApp>
        ))}
      </TaskApps>
      <Stacked><span>34%</span><span>CPU使用</span></Stacked>
      <Tray>
        <Svg>
          <path d="M3 10.500l5-5 5 5" stroke="#fff" strokeWidth="1.300" />
        </Svg>
        <Svg>
          <path d="M5 4.500h10v7H4V8M1 2h4v3H1zM2 0v2M4 0v2M3 5v2h3" stroke="#fff" />
          <path d="M7 6.500h6v3H7z" fill="#fff" />
        </Svg>
        <Svg>
          <path d="M2 15Q3 4 14 3M5 15q1-8 9-9M8 15q1-5 6-6" stroke="#ddd" />
          <path d="M11 15q0-3 3-3v3z" fill="#ddd" />
        </Svg>
        <Svg>
          <path d="M1 6h3l4-4v12l-4-4H1z" stroke="#fff" />
          <path d="M10 5q2 3 0 6M12 3q4 5 0 10" stroke="#aaa" />
        </Svg>
        <span>英</span>
        <Sogou size={16} />
      </Tray>
      <Stacked><span>13:17</span><span>2017/8/25</span></Stacked>
      <Notifications type="button" aria-label="notifications">
        <svg width="28" height="28" viewBox="0 0 28 28" aria-hidden="true">
          <path d="M3 4h16v12H11l-4 4v-4H3z" fill="#fff" />
          <path d="M6 7.500h10M6 10.500h10M6 13.500h6" stroke="#0a1518" />
          <circle cx="18" cy="18" r="8" fill="#2a2f31" stroke="#999" />
          <text x="15" y="23" fontSize="13" fill="#fff" fontFamily="Open Sans">2</text>
        </svg>
      </Notifications>
    </Task>
  );
}

export default function App() {
  return (
    <Desktop>
      <GlobalStyle />
      <TitleBar />
      <MenuBar />
      <MainToolbar />
      <Workspace>
        <ModuleNav />
        <Content>
          <PartBand $grow>
            <Tools items={partTools} />
            <label htmlFor="floor">楼层</label>
            <FloorPick>
              <select id="floor" defaultValue="5"><option value="5">第5层</option></select>
              <Caret />
            </FloorPick>
            <Tools items={listTools} />
          </PartBand>
          <Panels>
            <PartList />
            <PropertyPanel />
          </Panels>
        </Content>
      </Workspace>
      <StatusBar>
        <StatusCell $width="148px" />
        <StatusCell $width="78px"><Song text="层高:2.8m" /></StatusCell>
        <StatusCell $width="98px"><Song text="底标高:13.07m" /></StatusCell>
        <StatusCell $width="48px"><Song text="0" /></StatusCell>
        <StatusCell $grow>名称在当前层当前构件类型下不允许重名</StatusCell>
      </StatusBar>
      <TaskBar />
      <SectionEditor />
      <GridDialog />
      <InputMethodBar />
      <Ring $left="79px" $top="199px" $width="116px" $height="96px" />
      <Ring $left="519px" $top="153px" $width="135px" $height="86px" />
    </Desktop>
  );
}

/* ---------- styles ---------- */

const GlobalStyle = createGlobalStyle`
  * {
    box-sizing: border-box;
  }
  body {
    margin: 0;
    overflow: hidden;
    background: #f0f0f0;
  }
  button, input, select, textarea {
    font: inherit;
    color: inherit;
    margin: 0;
  }
  svg {
    display: block;
    flex: none;
  }
`;

const fade = css`
  background: linear-gradient(#ffffff, #f6f6f6 60%, #ededed);
`;

const Narrow = styled.span`
  font-family: "DejaVu Sans Mono", monospace;
  font-size: 10px;
`;

const TitleLatin = styled.span`
  font-family: Roboto, sans-serif;
  font-size: 13px;
`;

const Desktop = styled.div`
  position: relative;
  min-height: 100vh;
  display: flex;
  flex-direction: column;
  font-family: ${SANS};
  font-size: 12px;
  line-height: 16px;
  color: #000;
  background: #f0f0f0;
  white-space: nowrap;
`;

const Title = styled.header`
  display: flex;
  align-items: center;
  height: 23px;
  padding-left: 2px;
  background: #fff;
  h1 {
    flex: 1;
    margin: 0 0 0 4px;
    font-size: 12px;
    font-weight: 400;
    color: #8c8c8c;
  }
`;

const WindowButton = styled.button`
  width: 46px;
  height: 22px;
  padding: 0;
  display: flex;
  align-items: center;
  justify-content: center;
  border: 0;
  background: none;
`;

const MenuRow = styled.nav`
  display: flex;
  height: 30px;
  gap: 2px;
  padding: 1px 4px 2px 0;
`;

const Menus = styled.div`
  flex: 1;
  display: flex;
  align-items: center;
  gap: 11px;
  padding-left: 7px;
`;

const MenuButton = styled.button`
  padding: 0;
  border: 0;
  background: none;
`;

const Notice = styled.a`
  width: 187px;
  display: flex;
  align-items: center;
  justify-content: center;
  color: #6b3300;
  text-decoration: none;
  background: #f6f6f6;
`;

const Account = styled.div`
  width: 236px;
  display: flex;
  align-items: center;
  gap: 5px;
  padding-left: 4px;
  ${fade}
`;

const Credits = styled.span`
  padding: 0 3px;
`;

const More = styled.span`
  align-self: flex-start;
  margin-left: auto;
  padding: 4px 4px 0 0;
`;

const Caret = styled.i`
  width: 0;
  height: 0;
  margin-left: ${(p) => (p.$wide ? "3px" : "0")};
  border: 3px solid transparent;
  border-top-color: currentColor;
  border-bottom: 0;
`;

const Tool = styled.button`
  display: flex;
  align-items: center;
  gap: 4px;
  padding: 0;
  border: 0;
  background: none;
  &:disabled {
    color: #7d7d7d;
  }
`;

const Quick = styled(Tool)`
  gap: 6px;
`;

const Separator = styled.span`
  width: 1px;
  height: 16px;
  background: #bbb;
`;

const ToolbarRow = styled.div`
  display: flex;
  gap: 2px;
  height: 30px;
  padding: 1px 4px 2px 0;
`;

const Band = styled.div`
  display: flex;
  flex: ${(p) => (p.$grow ? "1" : "none")};
  width: ${(p) => p.$width || "auto"};
  min-width: 0;
  height: 27px;
  align-items: center;
  gap: 7px;
  padding-left: ${(p) => (p.$flush ? "1px" : "5px")};
  ${fade}
`;

const PartBand = styled(Band)`
  gap: 6px;
  ${Tool} {
    gap: 3px;
  }
`;

const ViewPick = styled.div`
  display: flex;
  align-items: center;
  gap: 2px;
  height: 23px;
  padding: 0 3px 0 2px;
  border: 1px solid #6e6e6e;
  color: #6e6e6e;
  select {
    appearance: none;
    width: 29px;
    padding: 0;
    border: 0;
    opacity: 1;
    background: none;
  }
`;

const FloorPick = styled.div`
  display: flex;
  align-items: center;
  width: 62px;
  height: 21px;
  padding: 0 5px 0 2px;
  background: #fff;
  select {
    appearance: none;
    flex: 1;
    width: 0;
    padding: 0;
    border: 0;
    background: none;
  }
`;

const Workspace = styled.main`
  flex: 1;
  display: flex;
  gap: 6px;
  padding-top: 1px;
`;

const Nav = styled.aside`
  width: 185px;
  display: flex;
  flex-direction: column;
  padding-bottom: 1px;
  font-family: ${SONG};
`;

const NavTitle = styled.div`
  display: flex;
  align-items: center;
  gap: 10px;
  height: 15px;
  margin-bottom: 2px;
  padding-right: 4px;
  border: 1px solid #555;
  border-left: 0;
  font-size: 13px;
  span {
    flex: 1;
  }
`;

const NavButton = styled.button`
  height: 22px;
  padding: 0;
  border: 1px solid #a0a0a0;
  border-top-color: #fff;
  background: #f0f0f0;
`;

const ExpandBar = styled.div`
  height: 27px;
  padding: 7px;
  ${fade}
`;

const TreeBox = styled.div`
  flex: 1;
  display: flex;
  margin: 0 1px 1px 2px;
  padding: 1px 1px 1px 0;
  border: 1px solid #828790;
  background: #fff;
`;

const TreeList = styled.ul`
  flex: 1;
  width: 0;
  margin: 0;
  padding: 0;
  list-style: none;
  overflow: hidden;
`;

const TreeRow = styled.div`
  display: flex;
  align-items: center;
  height: 16px;
  > * {
    flex-shrink: 0;
  }
`;

const TreeItem = styled.span`
  display: flex;
  align-items: center;
  background: ${(p) => (p.$active ? "#d9d9d9" : "none")};
`;

const TreeText = styled.span`
  padding-left: 4px;
  line-height: 16px;
`;

const Toggle = styled.span`
  width: ${(p) => p.$width};
  display: flex;
  justify-content: center;
`;

const Dots = styled.span`
  width: ${(p) => p.$width};
  height: 1px;
  background: repeating-linear-gradient(90deg, #808080 0 1px, transparent 1px 2px);
`;

const Trunk = styled.span`
  width: 31px;
  height: 16px;
  background: ${(p) =>
    p.$hidden
      ? "none"
      : "repeating-linear-gradient(#808080 0 1px, transparent 1px 2px) 12px 0 / 1px 100% no-repeat"};
`;

const Branch = styled.span`
  width: ${(p) => p.$width};
  height: 16px;
  background:
    repeating-linear-gradient(#808080 0 1px, transparent 1px 2px) 0 0 / 1px ${(p) => (p.$last ? "50%" : "100%")} no-repeat,
    repeating-linear-gradient(90deg, #808080 0 1px, transparent 1px 2px) 0 8px / 100% 1px no-repeat;
`;

const NewFlag = styled.b`
  align-self: flex-start;
  margin-left: 1px;
  font-family: "Liberation Sans", sans-serif;
  font-size: 8px;
  line-height: 9px;
  background: #ffd800;
`;

const ScrollTrack = styled.div`
  width: 16px;
  display: flex;
  flex-direction: column;
  align-items: center;
  gap: 4px;
  padding: 3px 0;
  background: #f0f0f0;
`;

const ScrollSpace = styled.div`
  flex: ${(p) => p.$grow};
`;

const ScrollThumb = styled.div`
  flex: ${(p) => p.$grow};
  width: 100%;
  background: #cdcdcd;
`;

const Content = styled.section`
  flex: 1;
  min-width: 0;
  display: flex;
  flex-direction: column;
  > div:first-child {
    flex: none;
    margin-right: 4px;
  }
`;

const Panels = styled.div`
  flex: 1;
  display: flex;
  gap: 7px;
  padding-bottom: 1px;
`;

const PartColumn = styled.div`
  width: 184px;
  display: flex;
  flex-direction: column;
  padding-top: 5px;
  background: #fff;
  font-family: ${SONG};
`;

const SearchRow = styled.div`
  display: flex;
  height: 26px;
  padding-bottom: 1px;
  input {
    width: 158px;
    padding: 0 2px 4px;
    border: 1px solid #7a7a7a;
    background: #fff;
  }
  input::placeholder {
    color: #777;
  }
  button {
    flex: 1;
    padding: 0 4px;
    border: 0;
    background: none;
  }
`;

const PartBox = styled.div`
  flex: 1;
  padding-top: 1px;
  border: 1px solid #828790;
  border-right-width: 2px;
  border-bottom-width: 2px;
  background: #fff;
`;

const PartIndent = styled.span`
  width: 31px;
`;

const PartName = styled.span`
  display: flex;
  align-items: center;
  gap: 6px;
  height: 16px;
  padding: 0 4px;
  background: ${(p) => (p.$active ? "#316ac5" : "none")};
`;

const PropertyColumn = styled.div`
  flex: 1;
  min-width: 0;
  display: flex;
  flex-direction: column;
  align-items: flex-start;
  padding-top: 1px;
  margin-right: 4px;
  background: #fff;
`;

const PropertyTab = styled.button`
  height: 21px;
  padding: 0 6px 0 4px;
  border: 0;
  border-right: 1px solid #d0d0d0;
  background: #fff;
`;

const PropertyBody = styled.div`
  flex: 1;
  width: 100%;
  display: flex;
  justify-content: space-between;
  margin-top: 3px;
  padding-left: 1px;
  border: 1px solid #a0a0a0;
  background: #fff;
`;

const PropertyTable = styled.table`
  width: 400px;
  align-self: flex-start;
  table-layout: fixed;
  border-collapse: separate;
  border-spacing: 0;
  th,
  td {
    height: 19px;
    padding: 0;
    border-right: 1px solid #bdbdbd;
    border-bottom: 1px solid #bdbdbd;
    font-weight: 400;
    line-height: 16px;
  }
  th {
    background: linear-gradient(#fff, #ececec);
  }
  thead th {
    height: 25px;
  }
  thead th:first-child {
    width: 21px;
  }
  thead th:nth-child(2) {
    width: 188px;
  }
`;

const tones = {
  selected: "color: #fff; background: #0078d7;",
  link: "color: #00f;",
  muted: "color: #808080;",
};

const PropertyRow = styled.tr`
  th {
    font-family: "DejaVu Sans Mono", monospace;
    font-size: 10px;
    ${(p) => p.$tone === "selected" && "color: #6a1a6a; background: #ffd48a;"}
  }
  td {
    padding-left: 19px;
    ${(p) => tones[p.$tone]}
  }
`;

const StatusBar = styled.footer`
  display: flex;
  gap: 2px;
  height: 22px;
  padding-top: 1px;
  font-family: ${SONG};
  background: #f6f6f6;
`;

const StatusCell = styled.div`
  display: flex;
  align-items: center;
  flex: ${(p) => (p.$grow ? "1" : "none")};
  width: ${(p) => p.$width || "auto"};
  padding: 0 ${(p) => (p.$sans ? "4px" : "1px")};
  font-family: ${(p) => (p.$sans ? SANS : SONG)};
  border: 1px solid #d5d5d5;
  background: linear-gradient(#fff, #f0f0f0);
`;

const EditorWindow = styled.section`
  position: absolute;
  left: 546px;
  right: 22px;
  top: 132px;
  display: flex;
  flex-direction: column;
  padding: 0 8px 7px;
  border: 1px solid #444;
  background: #d6e3f1;
`;

const EditorTitle = styled.div`
  height: 31px;
  margin: 0 -8px;
  padding: 11px 7px 0;
  color: #999;
  background: linear-gradient(#bccad8, #d6e3f1);
`;

const EditorPage = styled.div`
  background: #f0f0f0;
`;

const EditorTabs = styled.div`
  display: flex;
  align-items: flex-end;
  height: 21px;
`;

const EditorTab = styled.button`
  height: ${(p) => (p.$active ? "21px" : "19px")};
  padding: 0 ${(p) => (p.$active ? "12px 0 7px" : "4px")};
  border: 0;
  border-right: 1px solid #d0d0d0;
  background: ${(p) => (p.$active ? "#fff" : "#f0f0f0")};
`;

const EditorBody = styled.div`
  padding: 3px 3px 2px;
  border-bottom: 1px solid #d0d0d0;
  background: #fff;
`;

const EditorBar = styled.div`
  display: flex;
  align-items: center;
  gap: 6px;
  height: 27px;
  padding-left: 4px;
  ${fade}
`;

const OffsetBar = styled(EditorBar)`
  gap: 5px;
  height: 28px;
`;

const Grip = styled.span`
  width: 2px;
  height: 14px;
  background: repeating-linear-gradient(#bbb 0 2px, transparent 2px 4px);
`;

const Radios = styled.div`
  display: flex;
  gap: 11px;
  padding-right: 7px;
  margin-left: -2px;
  background: #f0f0f0;
  label {
    display: flex;
    align-items: center;
    gap: 8px;
  }
  input {
    appearance: none;
    width: 11px;
    height: 11px;
    border: 1px solid #808080;
    border-radius: 50%;
    background: #fff;
  }
  input:checked {
    background: radial-gradient(#000 3px, #fff 4px);
  }
`;

const OffsetLabel = styled.label`
  font-size: 13px;
`;

const Spin = styled.span`
  display: flex;
  align-items: center;
  width: 78px;
  height: 23px;
  border: 1px solid #7a7a7a;
  background: #fff;
  input {
    flex: 1;
    width: 0;
    padding: 0 10px 0 0;
    border: 0;
    color: #7a7a7a;
    text-align: right;
    background: none;
  }
  span {
    display: flex;
    flex-direction: column;
    gap: 9px;
    padding-right: 4px;
  }
`;

const Triangle = styled.i`
  border: 3px solid transparent;
  ${(p) =>
    p.$up
      ? "border-bottom-color: #555; border-top: 0;"
      : "border-top-color: #555; border-bottom: 0;"}
`;

const Unit = styled.span`
  padding-right: 8px;
`;

const Canvas = styled.div`
  background: #000;
`;

const EditorFoot = styled.div`
  height: 27px;
  padding: 2px;
  background: #f0f0f0;
  button {
    height: 23px;
    padding: 0 4px;
    border: 1px solid #0078d7;
    background: #e5f1fb;
  }
`;

const EditorStatus = styled.div`
  display: flex;
  align-items: flex-end;
  gap: 2px;
  height: 25px;
  margin: 0 -1px;
  padding-top: 3px;
  background: #f0f0f0;
  ${StatusCell} {
    height: 22px;
  }
  svg {
    margin-left: -16px;
  }
`;

const Dialog = styled.section`
  position: absolute;
  left: 123px;
  top: 237px;
  width: 411px;
  border: 1px solid #2a86dc;
  background: #f0f0f0;
  box-shadow: 0 4px 14px rgba(0, 0, 0, 0.4);
`;

const DialogTitle = styled.div`
  display: flex;
  align-items: center;
  justify-content: space-between;
  height: 25px;
  padding: 0 9px 0 3px;
  background: #fff;
  h2 {
    margin: 0;
    font-size: 12px;
    font-weight: 400;
  }
  button {
    padding: 0;
    border: 0;
    background: none;
  }
`;

const DialogForm = styled.form`
  display: flex;
  flex-direction: column;
  gap: 7px;
  padding: 14px 13px 8px;
  font-family: ${SONG};
`;

const Group = styled.fieldset`
  min-width: 0;
  margin: 0;
  padding: 2px 9px 6px 7px;
  border: 1px solid #dcdcdc;
  legend {
    height: 16px;
    padding: 0;
  }
  textarea {
    display: block;
    width: 100%;
    height: 41px;
    padding: 1px 2px;
    border: 1px solid #7a7a7a;
    outline: none;
    resize: none;
    font-family: "DejaVu Sans Mono", monospace;
    font-size: 10px;
    line-height: 16px;
    background: #fff;
  }
  textarea:focus {
    border-color: #4a7296;
  }
  textarea::selection {
    color: #fff;
    background: #0078d7;
  }
`;

const DialogButtons = styled.div`
  display: flex;
  justify-content: flex-end;
  gap: 15px;
  padding: 4px 1px 0 0;
  button {
    width: 72px;
    height: 23px;
    padding: 0;
    border: 1px solid #adadad;
    background: #e1e1e1;
  }
`;

const ImeBar = styled.div`
  position: absolute;
  right: 0;
  bottom: 41px;
  height: 24px;
  display: flex;
  align-items: center;
  gap: 6px;
  padding-right: 4px;
  border: 1px solid #a9c9ea;
  background: #fbfdff;
  strong {
    font-size: 14px;
    color: #1d74d0;
  }
`;

const Task = styled.div`
  display: flex;
  align-items: center;
  height: 40px;
  padding-right: 14px;
  color: #fff;
  background: linear-gradient(90deg, #020c0e, #03110f 60%, #000);
`;

const StartButton = styled.button`
  width: 48px;
  height: 40px;
  padding: 0 16px;
  border: 0;
  background: #000;
`;

const TaskSearch = styled.div`
  width: 344px;
  height: 40px;
  display: flex;
  align-items: center;
  gap: 6px;
  padding: 0 12px 0 8px;
  background: #333;
  input {
    flex: 1;
    padding: 0;
    border: 0;
    font-size: 14px;
    background: none;
  }
  input::placeholder {
    color: #9a9a9a;
  }
`;

const TaskApps = styled.div`
  flex: 1;
  display: flex;
  gap: 2px;
  padding-left: 2px;
`;

const TaskApp = styled.button`
  width: 48px;
  height: 40px;
  padding: 0;
  display: flex;
  align-items: center;
  justify-content: center;
  border: 0;
  border-bottom: 2px solid ${(p) => (p.$running ? "#76b9ed" : "transparent")};
  background: ${(p) => (p.$active ? "#343c3e" : "none")};
`;

const Stacked = styled.div`
  display: flex;
  flex-direction: column;
  align-items: center;
  gap: 2px;
`;

const Tray = styled.div`
  display: flex;
  align-items: center;
  gap: 9px;
  padding: 0 18px;
`;

const Notifications = styled.button`
  padding: 0 0 0 18px;
  border: 0;
  background: none;
`;

const Ring = styled.div`
  position: absolute;
  left: ${(p) => p.$left};
  top: ${(p) => p.$top};
  width: ${(p) => p.$width};
  height: ${(p) => p.$height};
  border: 3px solid #f00;
  border-radius: 50%;
  pointer-events: none;
`;
